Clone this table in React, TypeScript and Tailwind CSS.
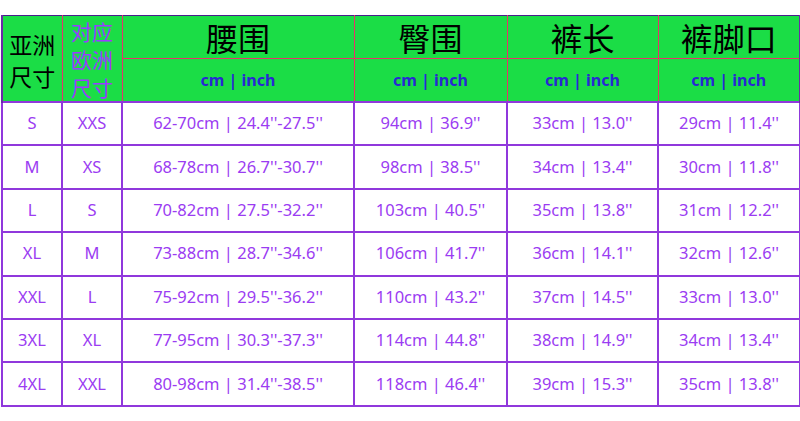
import React from 'react';

const rows = [
    ['S', 'XXS', "62-70cm | 24.4''-27.5''", "94cm | 36.9''", "33cm | 13.0''", "29cm | 11.4''"],
    ['M', 'XS', "68-78cm | 26.7''-30.7''", "98cm | 38.5''", "34cm | 13.4''", "30cm | 11.8''"],
    ['L', 'S', "70-82cm | 27.5''-32.2''", "103cm | 40.5''", "35cm | 13.8''", "31cm | 12.2''"],
    ['XL', 'M', "73-88cm | 28.7''-34.6''", "106cm | 41.7''", "36cm | 14.1''", "32cm | 12.6''"],
    ['XXL', 'L', "75-92cm | 29.5''-36.2''", "110cm | 43.2''", "37cm | 14.5''", "33cm | 13.0''"],
    ['3XL', 'XL', "77-95cm | 30.3''-37.3''", "114cm | 44.8''", "38cm | 14.9''", "34cm | 13.4''"],
    ['4XL', 'XXL', "80-98cm | 31.4''-38.5''", "118cm | 46.4''", "39cm | 15.3''", "35cm | 13.8''"],
];

const titles = ['腰围', '臀围', '裤长', '裤脚口'];
const cjk = { fontFamily: '"Noto Sans CJK SC", sans-serif' };

export default function App() {
    return (
        <div className="w-[800px] h-[421px] bg-white pt-[15px] pl-[1px]" style={{ fontFamily: '"Noto Sans", "Noto Sans CJK SC", sans-serif' }}>
            <table className="border-collapse table-fixed w-[798px]">
                <colgroup>
                    <col className="w-[60px]" />
                    <col className="w-[60px]" />
                    <col className="w-[232px]" />
                    <col className="w-[153px]" />
                    <col className="w-[151px]" />
                    <col className="w-[142px]" />
                </colgroup>
                <thead>
                    <tr className="h-[43px] bg-[#1bdd46]">
                        <td rowSpan={2} className="border border-[#e8336b] border-t-[#4b1d8c] border-l-2 border-l-[#6a2aa8] text-center text-[23px] leading-[32px] text-black p-0 pt-[2px]" style={cjk}>
                            亚洲<br />尺寸
                        </td>
                        <td rowSpan={2} className="border border-[#e8336b] border-t-[#4b1d8c] text-center text-[21px] leading-[28px] text-[#9a3cff] p-0 pt-[1px]" style={cjk}>
                            对应<br />欧洲<br />尺寸
                        </td>
                        {titles.map((t, i) => (
                            <td key={t} className={`border border-[#e8336b] border-t-[#4b1d8c] text-center text-[32px] leading-[40px] text-black p-0 ${i === 3 ? 'border-r-2 border-r-[#6a2aa8]' : ''}`} style={cjk}>
                                {t}
                            </td>
                        ))}
                    </tr>
                    <tr className="h-[43px] bg-[#1bdd46]">
                        {titles.map((t, i) => (
                            <td key={t} className={`border border-[#e8336b] text-center text-[16px] font-bold text-[#2828d4] p-0 ${i === 3 ? 'border-r-2 border-r-[#6a2aa8]' : ''}`}>
                                cm | inch
                            </td>
                        ))}
                    </tr>
                </thead>
                <tbody>
                    {rows.map((r, i) => (
                        <tr key={i} className="h-[43.4px]">
                            {r.map((c, j) => (
                                <td key={j} className="border-2 border-[#9038dc] text-center text-[16.5px] text-[#9b3cf2] p-0 whitespace-nowrap">
                                    {c}
                                </td>
                            ))}
                        </tr>
                    ))}
                </tbody>
            </table>
        </div>
    );
}
